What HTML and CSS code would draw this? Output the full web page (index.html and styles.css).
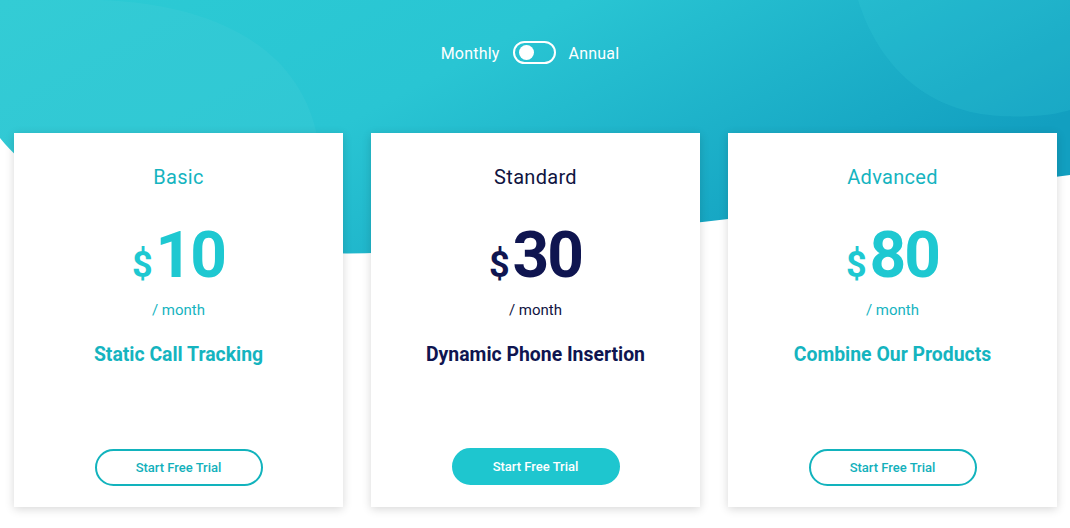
FILE: index.html
```html
<!DOCTYPE html>
<html>
<head>
<meta charset="utf-8">
<link rel="stylesheet" href="styles.css">
</head>
<body>
<div class="page">
  <svg class="bg" width="1070" height="528" viewBox="0 0 1070 528" preserveAspectRatio="none">
    <defs>
      <linearGradient id="g" x1="0" y1="0" x2="1" y2="0.45">
        <stop offset="0" stop-color="#2ccbd4"/>
        <stop offset="0.45" stop-color="#29c5d3"/>
        <stop offset="1" stop-color="#129fc0"/>
      </linearGradient>
      <clipPath id="c">
        <path d="M0,0 H1070 V175 C900,198 700,226 420,250 C250,266 70,225 0,138 Z"/>
      </clipPath>
    </defs>
    <path d="M0,0 H1070 V175 C900,198 700,226 420,250 C250,266 70,225 0,138 Z" fill="url(#g)"/>
    <g clip-path="url(#c)">
      <path d="M60,0 C200,-5 300,40 318,140 C330,220 320,300 300,400 L0,400 L0,0 Z" fill="#ffffff" opacity="0.035"/>
      <path d="M858,0 C880,70 930,112 1000,116 C1040,118 1060,113 1070,110 L1070,0 Z" fill="#3fd0e0" opacity="0.18"/>
    </g>
  </svg>
  <div class="toggle-row">
    <span class="toggle-label">Monthly</span>
    <span class="switch"><span class="knob"></span></span>
    <span class="toggle-label">Annual</span>
  </div>
  <div class="cards">
    <div class="card teal">
      <div class="title">Basic</div>
      <div class="price"><span class="cur">$</span><span class="amt">10</span></div>
      <div class="per">/ month</div>
      <div class="feature">Static Call Tracking</div>
      <a class="btn">Start Free Trial</a>
    </div>
    <div class="card navy">
      <div class="title">Standard</div>
      <div class="price"><span class="cur">$</span><span class="amt">30</span></div>
      <div class="per">/ month</div>
      <div class="feature">Dynamic Phone Insertion</div>
      <a class="btn filled">Start Free Trial</a>
    </div>
    <div class="card teal">
      <div class="title">Advanced</div>
      <div class="price"><span class="cur">$</span><span class="amt">80</span></div>
      <div class="per">/ month</div>
      <div class="feature">Combine Our Products</div>
      <a class="btn">Start Free Trial</a>
    </div>
  </div>
</div>
</body>
</html>
```
FILE: styles.css
```css
* { box-sizing: border-box; }
html, body { margin: 0; padding: 0; }
body {
  font-family: Roboto, "Liberation Sans", Arial, sans-serif;
  background: #ffffff;
  width: 1070px;
  height: 528px;
  overflow: hidden;
}
.page {
  position: relative;
  width: 1070px;
  height: 528px;
}
.bg {
  position: absolute;
  left: 0;
  top: 0;
  z-index: 0;
}
.toggle-row {
  position: relative;
  z-index: 1;
  display: flex;
  justify-content: center;
  align-items: flex-start;
  gap: 13px;
  padding-top: 42px;
  padding-right: 10px;
  height: 133px;
}
.toggle-label {
  color: #ffffff;
  font-size: 16px;
  line-height: 23px;
  letter-spacing: 0.2px;
}
.switch {
  width: 43px;
  height: 23px;
  margin-top: -1px;
  border: 2px solid #ffffff;
  border-radius: 12px;
  display: flex;
  align-items: center;
  padding-left: 4px;
}
.knob {
  width: 15px;
  height: 15px;
  border-radius: 50%;
  background: #ffffff;
}
.cards {
  position: relative;
  z-index: 1;
  display: flex;
  gap: 28px;
  padding-left: 14px;
}
.card {
  width: 329px;
  height: 374px;
  background: #ffffff;
  box-shadow: 0 2px 9px rgba(0, 0, 0, 0.16);
  display: flex;
  flex-direction: column;
  align-items: center;
  padding-top: 32px;
  padding-bottom: 21px;
}
.title {
  font-size: 20px;
  line-height: 24px;
  letter-spacing: 0.3px;
}
.price {
  margin-top: 34px;
  height: 65px;
  line-height: 65px;
  display: flex;
  align-items: baseline;
}
.cur {
  font-size: 36px;
  font-weight: 700;
  margin-right: 3px;
}
.amt {
  font-size: 64px;
  font-weight: 700;
  letter-spacing: -2px;
}
.per {
  margin-top: 12px;
  font-size: 15px;
  line-height: 20px;
}
.feature {
  margin-top: 23px;
  font-size: 19.4px;
  line-height: 24px;
  font-weight: 700;
}
.btn {
  margin-top: auto;
  width: 168px;
  height: 37px;
  border: 2px solid #12b3bd;
  border-radius: 19px;
  display: flex;
  align-items: center;
  justify-content: center;
  font-size: 13px;
  font-weight: 500;
  color: #12b0bb;
  background: #ffffff;
}
.btn.filled {
  background: #1ec6cf;
  border-color: #1ec6cf;
  color: #ffffff;
  margin-bottom: 1px;
}
.teal .title, .teal .per, .teal .feature { color: #15b4bf; }
.teal .price { color: #1ec8d1; }
.navy .title, .navy .per { color: #10143f; }
.navy .price, .navy .feature { color: #0f1550; }
```
